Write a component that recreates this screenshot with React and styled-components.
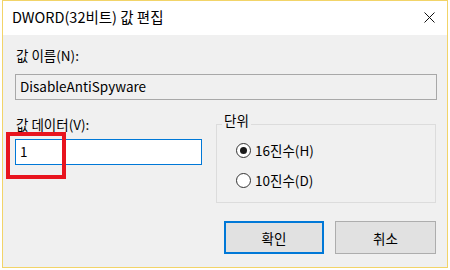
import React from "react";
import styled, { createGlobalStyle } from "styled-components";

const Global = createGlobalStyle`
  html, body {
    margin: 0;
    padding: 0;
    background: #ffffff;
  }
  body {
    font-family: "Noto Sans CJK KR", "Noto Sans", sans-serif;
    color: #000000;
  }
`;

const Page = styled.div`
  width: 450px;
  height: 270px;
  padding: 0 2px 0 2px;
  box-sizing: border-box;
`;

const Window = styled.div`
  width: 446px;
  height: 268px;
  box-sizing: border-box;
  border: 1px solid #f2d468;
  background: #f0f0f0;
  display: flex;
  flex-direction: column;
`;

const TitleBar = styled.div`
  height: 34px;
  background: #ffffff;
  display: flex;
  align-items: center;
  justify-content: space-between;
  padding: 0 12px 0 9px;
  flex-shrink: 0;
`;

const Title = styled.span`
  font-size: 14.5px;
  line-height: 20px;
  padding-bottom: 2px;
`;

const CloseButton = styled.div`
  width: 11px;
  height: 11px;
  display: flex;
  margin-bottom: 2px;
`;

const Body = styled.div`
  padding: 10px 10px 0 12px;
  display: flex;
  flex-direction: column;
`;

const Label = styled.div`
  font-size: 13.5px;
  line-height: 20px;
  padding-left: 1px;
  margin-top: ${(p) => p.$top || 0}px;
`;

const Field = styled.div`
  box-sizing: border-box;
  height: 26px;
  width: ${(p) => p.$width || "100%"};
  margin-top: ${(p) => p.$top || 0}px;
  border: 1px solid ${(p) => (p.$focused ? "#0078d7" : "#a8a8a8")};
  background: ${(p) => (p.$focused ? "#ffffff" : "#f0f0f0")};
  font-size: 13.5px;
  line-height: 23px;
  padding-left: 4px;
  white-space: nowrap;
`;

const Lower = styled.div`
  display: grid;
  grid-template-columns: 187px 1fr;
  column-gap: 14px;
  padding-right: 1px;
`;

const DataColumn = styled.div`
  position: relative;
  display: flex;
  flex-direction: column;
`;

const Highlight = styled.div`
  position: absolute;
  left: -9px;
  top: 32px;
  width: 60px;
  height: 47px;
  box-sizing: border-box;
  border: 4px solid #e8141e;
  pointer-events: none;
`;

const Group = styled.div`
  position: relative;
  margin-top: 24px;
  height: 79px;
  box-sizing: border-box;
  border: 1px solid #dcdcdc;
  padding: 10px 0 0 19px;
`;

const Legend = styled.span`
  position: absolute;
  left: 5px;
  top: -15px;
  padding: 0 2px;
  background: #f0f0f0;
  font-size: 13.5px;
  line-height: 20px;
`;

const RadioRow = styled.div`
  height: 30px;
  display: flex;
  align-items: center;
  gap: 4px;
  font-size: 13.5px;
`;

const RadioCircle = styled.span`
  width: 15px;
  height: 15px;
  box-sizing: border-box;
  border-radius: 50%;
  border: 1px solid #333333;
  background: #ffffff;
  display: flex;
  align-items: center;
  justify-content: center;
  &::after {
    content: "";
    width: 7px;
    height: 7px;
    border-radius: 50%;
    background: ${(p) => (p.$checked ? "#1a1a1a" : "transparent")};
  }
`;

const Buttons = styled.div`
  display: flex;
  justify-content: flex-end;
  gap: 11px;
  margin-top: 18px;
  padding-right: 1px;
`;

const Button = styled.div`
  box-sizing: border-box;
  width: ${(p) => p.$width}px;
  height: 33px;
  background: #e1e1e1;
  border: ${(p) => (p.$default ? "2px solid #0078d7" : "1px solid #adadad")};
  display: flex;
  align-items: center;
  justify-content: center;
  font-size: 13.5px;
`;

export default function App() {
  return (
    <Page>
      <Global />
      <Window>
        <TitleBar>
          <Title>DWORD(32비트) 값 편집</Title>
          <CloseButton>
            <svg width="11" height="11" viewBox="0 0 11 11">
              <path d="M0.5 0.5 L10.5 10.5 M10.5 0.5 L0.5 10.5" stroke="#111" strokeWidth="1" fill="none" />
            </svg>
          </CloseButton>
        </TitleBar>
        <Body>
          <Label>값 이름(N):</Label>
          <Field $top={9}>DisableAntiSpyware</Field>
          <Lower>
            <DataColumn>
              <Label $top={14}>값 데이터(V):</Label>
              <Field $top={5} $focused>1</Field>
              <Highlight />
            </DataColumn>
            <Group>
              <Legend>단위</Legend>
              <RadioRow>
                <RadioCircle $checked />
                16진수(H)
              </RadioRow>
              <RadioRow>
                <RadioCircle />
                10진수(D)
              </RadioRow>
            </Group>
          </Lower>
          <Buttons>
            <Button $width={100} $default>확인</Button>
            <Button $width={101}>취소</Button>
          </Buttons>
        </Body>
      </Window>
    </Page>
  );
}
